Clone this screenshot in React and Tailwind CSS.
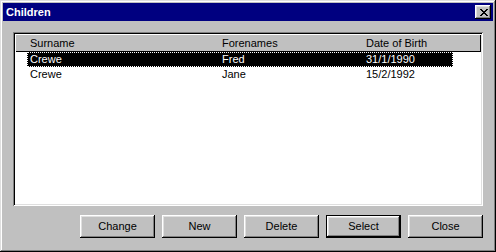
import React from 'react';

const font = { fontFamily: '"Liberation Sans", Arial, sans-serif' };

const btn =
    'w-[75px] h-[23px] bg-[#c0c0c0] text-[11px] text-black flex items-center justify-center shadow-[inset_-1px_-1px_#000,inset_1px_1px_#fff,inset_-2px_-2px_#808080,inset_2px_2px_#dfdfdf]';
const btnDefault =
    'w-[75px] h-[23px] bg-[#c0c0c0] text-[11px] text-black flex items-center justify-center border border-black shadow-[inset_-1px_-1px_#000,inset_1px_1px_#fff,inset_-2px_-2px_#808080,inset_2px_2px_#dfdfdf]';

const children = [
    { surname: 'Crewe', forenames: 'Fred', dob: '31/1/1990' },
    { surname: 'Crewe', forenames: 'Jane', dob: '15/2/1992' },
];

const CloseGlyph = () => (
    <svg width="8" height="7" viewBox="0 0 8 7" shapeRendering="crispEdges">
        <path
            fill="#000"
            d="M0 0h2v1H0zM6 0h2v1H6zM1 1h2v1H1zM5 1h2v1H5zM2 2h4v1H2zM3 3h2v1H3zM2 4h4v1H2zM1 5h2v1H1zM5 5h2v1H5zM0 6h2v1H0zM6 6h2v1H6z"
        />
    </svg>
);

export default function App() {
    return (
        <div style={font} className="w-[496px] h-[252px] bg-[#c0c0c0] p-[3px] flex flex-col shadow-[inset_-1px_-1px_#000,inset_1px_1px_#dfdfdf,inset_-2px_-2px_#808080,inset_2px_2px_#fff]">
            {/* title bar */}
            <div className="h-[18px] bg-[#000080] flex items-center justify-between pl-[3px] pr-[2px]">
                <span className="text-white text-[11px] font-bold leading-none">Children</span>
                <button className="w-[16px] h-[14px] bg-[#c0c0c0] flex items-center justify-center pl-[1px] shadow-[inset_-1px_-1px_#000,inset_1px_1px_#fff,inset_-2px_-2px_#808080,inset_2px_2px_#dfdfdf]">
                    <CloseGlyph />
                </button>
            </div>

            <div className="flex-1 flex flex-col px-[10px] pt-[11px] pb-[11px]">
                {/* list */}
                <div className="h-[174px] bg-white p-[2px] flex flex-col shadow-[inset_1px_1px_#808080,inset_-1px_-1px_#fff,inset_2px_2px_#000,inset_-2px_-2px_#dfdfdf]">
                    <div className="h-[18px] bg-[#c0c0c0] flex items-center pl-[15px] text-[11px] text-black shadow-[inset_1px_1px_#fff,inset_-1px_-1px_#000]">
                        <div className="w-[192px]">Surname</div>
                        <div className="w-[144px]">Forenames</div>
                        <div className="flex-1">Date of Birth</div>
                    </div>
                    {children.map((c, i) => (
                        <div
                            key={i}
                            className={
                                i === 0
                                    ? 'ml-[12px] w-[426px] h-[15px] flex items-center text-[11px] bg-black text-white border border-dotted border-white'
                                    : 'ml-[12px] w-[426px] h-[15px] flex items-center text-[11px] text-black border border-transparent'
                            }
                        >
                            <div className="w-[194px] pl-[2px]">{c.surname}</div>
                            <div className="w-[144px]">{c.forenames}</div>
                            <div className="flex-1">{c.dob}</div>
                        </div>
                    ))}
                </div>

                {/* buttons */}
                <div className="mt-[9px] flex justify-end gap-[7px]">
                    <button className={btn}>Change</button>
                    <button className={btn}>New</button>
                    <button className={btn}>Delete</button>
                    <button className={btnDefault}>Select</button>
                    <button className={btn}>Close</button>
                </div>
            </div>
        </div>
    );
}
